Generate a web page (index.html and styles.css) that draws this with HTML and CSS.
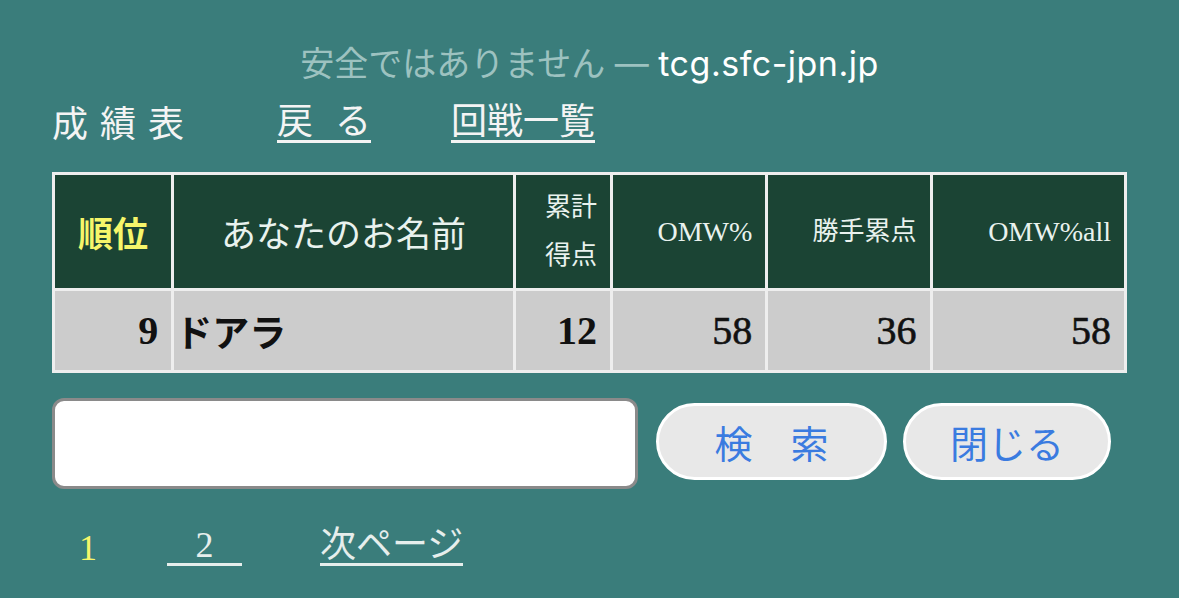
FILE: index.html
```html
<!DOCTYPE html>
<html lang="ja">
<head>
<meta charset="utf-8">
<title>成績表</title>
<link rel="stylesheet" href="styles.css">
</head>
<body>
<div class="page">
  <div class="addr"><span class="warn">安全ではありません — </span><span class="domain">tcg.sfc-jpn.jp</span></div>
  <div class="nav">
    <span class="nav-title">成績表</span>
    <a class="nav-link back" href="#"><span class="sp">戻</span>る</a>
    <a class="nav-link" href="#">回戦一覧</a>
  </div>
  <table class="results">
    <colgroup>
      <col class="c1"><col class="c2"><col class="c3"><col class="c4"><col class="c5"><col class="c6">
    </colgroup>
    <thead>
      <tr>
        <th class="rank-h">順位</th>
        <th class="name-h">あなたのお名前</th>
        <th class="small two">累計<br>得点</th>
        <th class="small latin">OMW%</th>
        <th class="small">勝手累点</th>
        <th class="small latin">OMW%all</th>
      </tr>
    </thead>
    <tbody>
      <tr>
        <td class="num bold">9</td>
        <td class="name bold">ドアラ</td>
        <td class="num bold">12</td>
        <td class="num med">58</td>
        <td class="num med">36</td>
        <td class="num med">58</td>
      </tr>
    </tbody>
  </table>
  <div class="search">
    <input class="search-input" type="text">
    <button class="btn btn-search">検　索</button>
    <button class="btn btn-close">閉じる</button>
  </div>
  <div class="pager">
    <span class="pg-cur">1</span>
    <a class="pg-link pg-num" href="#">2</a>
    <a class="pg-link pg-next" href="#">次ページ</a>
  </div>
</div>
</body>
</html>
```
FILE: styles.css
```css
html, body {
  margin: 0;
  padding: 0;
  background: #3a7d7b;
}
body {
  width: 1179px;
  height: 598px;
  overflow: hidden;
}
.page {
  padding: 0 0 0 52px;
  font-family: "Liberation Serif", "Noto Sans CJK JP", serif;
  color: #f2f2f2;
}
.addr {
  margin-left: -52px;
  padding-top: 44px;
  height: 40px;
  line-height: 40px;
  text-align: center;
  font-family: Inter, "Noto Sans CJK JP", sans-serif;
  font-size: 34px;
}
.warn { color: #9dc2c0; }
.domain { color: #ffffff; letter-spacing: 0.5px; }

.nav {
  margin-top: 20px;
  display: flex;
  align-items: flex-end;
  font-size: 36px;
  line-height: 36px;
}
.nav-title {
  letter-spacing: 12px;
  width: 225px;
  color: #f4f4f4;
}
.nav-link {
  display: inline-block;
  color: #f4f4f4;
  text-decoration: none;
  border-bottom: 3px solid #f4f4f4;
  line-height: 36px;
}
.back {
  white-space: nowrap;
  margin-right: 80px;
}
.sp { letter-spacing: 22px; }

.results {
  margin-top: 29px;
  border-collapse: separate;
  border-spacing: 3px;
  background: #eeeeee;
  table-layout: fixed;
  width: 1075px;
}
.c1 { width: 116px; }
.c2 { width: 338px; }
.c3 { width: 94px; }
.c4 { width: 152px; }
.c5 { width: 161px; }
.c6 { width: 191px; }
.results th {
  background: #1b4434;
  height: 113px;
  padding: 0;
  font-weight: normal;
  vertical-align: middle;
  color: #e9f2ee;
}
.rank-h {
  color: #f6f66a !important;
  font-weight: bold !important;
  font-size: 35px;
  text-align: center;
}
.name-h {
  font-size: 35px;
  text-align: center;
}
.small {
  font-size: 26px;
  text-align: right;
  padding-right: 13px !important;
  line-height: 32px;
}
.latin { font-size: 28px; }
.two { line-height: 48px; }
.results td {
  background: #cccccc;
  height: 79px;
  padding: 0;
  font-size: 40px;
  color: #111111;
  vertical-align: middle;
}
.num {
  text-align: right;
  padding-right: 13px !important;
}
.med { -webkit-text-stroke: 0.6px #111111; }
.name {
  text-align: left;
  padding-left: 1px !important;
  font-size: 37px !important;
}
.bold { font-weight: bold; }

.search {
  margin-top: 25px;
  display: flex;
  align-items: center;
}
.search-input {
  box-sizing: border-box;
  width: 586px;
  height: 91px;
  margin: 0 18px 0 0;
  border: 3px solid #8a8a8a;
  border-radius: 12px;
  background: #ffffff;
}
.btn {
  box-sizing: border-box;
  height: 77px;
  border: 3px solid #ffffff;
  border-radius: 40px;
  background: #e8e8e8;
  color: #3a7be0;
  font-family: "Noto Sans CJK JP", sans-serif;
  font-size: 38px;
  padding: 0;
  margin-top: -4px;
}
.btn-search { width: 231px; margin-right: 16px; }
.btn-close { width: 208px; }

.pager {
  margin-top: 38px;
  display: flex;
  align-items: flex-end;
  font-size: 36px;
  line-height: 36px;
}
.pg-cur {
  color: #f6f66a;
  margin-left: 27px;
  width: 18px;
}
.pg-link {
  display: inline-block;
  color: #e6eeec;
  text-decoration: none;
  border-bottom: 3px solid #e6eeec;
  line-height: 36px;
}
.pg-num {
  margin-left: 70px;
  width: 75px;
  text-align: center;
}
.pg-next {
  margin-left: 78px;
}
```
